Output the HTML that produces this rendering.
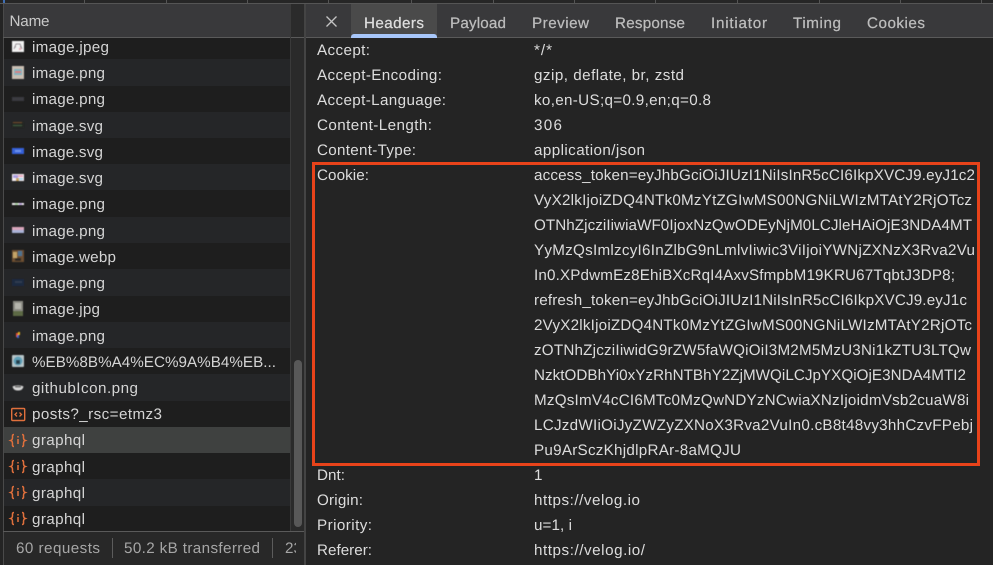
<!DOCTYPE html>
<html lang="en">
<head>
<meta charset="utf-8">
<title>Network Headers</title>
<style>
html,body{margin:0;padding:0;background:#242424;overflow:hidden;width:993px;height:565px}
svg{display:block;position:absolute;left:0;top:0}
text{font-family:"Liberation Sans",Arial,sans-serif;text-rendering:geometricPrecision}
.n{font-size:15.200px;fill:#d4d4d4}
.d{font-size:15.200px;fill:#dcdcdc}
.t{font-size:15.200px;fill:#bdbdbd;stroke:#bdbdbd;stroke-width:.25}
.f{font-size:15.200px;fill:#a6a6a6}
</style>
</head>
<body>
<svg width="993" height="565" viewBox="0 0 993 565" xmlns="http://www.w3.org/2000/svg">
<defs>
<clipPath id="fc"><rect x="0" y="531" width="296" height="34"/></clipPath>
<filter id="bl" x="-5%" y="-5%" width="110%" height="110%"><feGaussianBlur stdDeviation="0.45"/></filter>
</defs>
<rect width="993" height="565" fill="#242424"/>

<!-- top strip -->
<rect width="993" height="3" fill="#262626"/>
<rect x="0" y="3" width="993" height="1" fill="#555"/>
<g fill="#555">
<rect x="84" y="0" width="1" height="3"/><rect x="166" y="0" width="1" height="3"/><rect x="247" y="0" width="1" height="3"/><rect x="328" y="0" width="1" height="3"/><rect x="411" y="0" width="1" height="3"/><rect x="493" y="0" width="1" height="3"/><rect x="574" y="0" width="1" height="3"/><rect x="655" y="0" width="1" height="3"/><rect x="737" y="0" width="1" height="3"/><rect x="819" y="0" width="1" height="3"/><rect x="900" y="0" width="1" height="3"/><rect x="981" y="0" width="1" height="3"/>
</g>
<rect x="3" y="0" width="2" height="3" fill="#3f6fb5"/>

<!-- left column -->
<rect x="0" y="4" width="3" height="561" fill="#242424"/>
<rect x="3" y="4" width="1" height="561" fill="#4a4a4a"/>
<rect x="4" y="4" width="287" height="33" fill="#39393b"/>
<rect x="291" y="4" width="13" height="33" fill="#2b2b2b"/>
<rect x="3" y="37" width="301" height="1" fill="#5a5a5a"/>

<!-- rows -->
<rect x="4" y="38" width="286" height="21" fill="#1e1e1e"/>
<rect x="4" y="59" width="286" height="27" fill="#252628"/>
<rect x="4" y="86" width="286" height="26" fill="#1e1e1e"/>
<rect x="4" y="112" width="286" height="26" fill="#252628"/>
<rect x="4" y="138" width="286" height="26" fill="#1e1e1e"/>
<rect x="4" y="164" width="286" height="26" fill="#252628"/>
<rect x="4" y="190" width="286" height="27" fill="#1e1e1e"/>
<rect x="4" y="217" width="286" height="26" fill="#252628"/>
<rect x="4" y="243" width="286" height="26" fill="#1e1e1e"/>
<rect x="4" y="269" width="286" height="27" fill="#252628"/>
<rect x="4" y="296" width="286" height="26" fill="#1e1e1e"/>
<rect x="4" y="322" width="286" height="26" fill="#252628"/>
<rect x="4" y="348" width="286" height="26" fill="#1e1e1e"/>
<rect x="4" y="374" width="286" height="27" fill="#252628"/>
<rect x="4" y="401" width="286" height="26" fill="#1e1e1e"/>
<rect x="4" y="427" width="286" height="26" fill="#3f4140"/>
<rect x="4" y="453" width="286" height="26" fill="#1e1e1e"/>
<rect x="4" y="479" width="286" height="27" fill="#252628"/>
<rect x="4" y="506" width="286" height="25" fill="#1e1e1e"/>

<!-- scrollbar -->
<rect x="290" y="38" width="14" height="493" fill="#2a2a2a"/>
<rect x="290" y="4" width="1" height="527" fill="#3a3a3a"/>
<rect x="294" y="360" width="8" height="167" rx="4" fill="#585858"/>

<!-- divider -->
<rect x="304" y="4" width="2" height="561" fill="#444"/>

<!-- footer -->
<rect x="4" y="532" width="300" height="33" fill="#282828"/>
<rect x="3" y="531" width="301" height="1" fill="#5a5a5a"/>
<rect x="112" y="538" width="1" height="20" fill="#5c5c5c"/>
<rect x="272" y="538" width="1" height="20" fill="#5c5c5c"/>
<text class="f" x="16" y="553" textLength="84" lengthAdjust="spacing">60 requests</text>
<text class="f" x="124" y="553" textLength="136" lengthAdjust="spacing">50.2 kB transferred</text>
<g clip-path="url(#fc)"><text class="f" x="285" y="553" textLength="17" lengthAdjust="spacing">23</text></g>

<text x="9.5" y="26" font-size="15.200" fill="#c9c9c9" textLength="40" lengthAdjust="spacing">Name</text>

<!-- thumbnails -->
<g filter="url(#bl)">
<rect x="12" y="41" width="12" height="11" fill="#f2f2f2"/><path d="M14 49l2-5h4l2 5M15 47h1M20 47h1" stroke="#8a8088" stroke-width="1" fill="none"/><rect x="19" y="48" width="2" height="2" fill="#e6a5b0"/>
<rect x="12" y="66" width="12" height="13" fill="#c9bfb4"/><rect x="14" y="69" width="8" height="6" fill="#7cb3c0"/><rect x="15" y="71" width="6" height="2" fill="#d67f7f"/>
<rect x="12" y="97" width="12" height="4" fill="#3a3b3f"/>
<rect x="12" y="122" width="12" height="6" fill="#232523"/><rect x="13" y="122" width="9" height="1" fill="#6a4a2c"/><rect x="13" y="125" width="9" height="1" fill="#3f5a40"/>
<rect x="12" y="148" width="12" height="6" fill="#3560d8"/><rect x="15" y="150" width="6" height="2" fill="#6d92ea"/>
<rect x="12" y="174" width="12" height="7" fill="#f4eef2"/><rect x="13" y="175" width="5" height="3" fill="#a89be0"/><rect x="18" y="175" width="5" height="2" fill="#e9a8c0"/><rect x="16" y="178" width="3" height="3" fill="#c9a45a"/><rect x="19" y="178" width="4" height="2" fill="#a8d4ec"/>
<rect x="12" y="203" width="12" height="2" fill="#f0eef0"/><rect x="15" y="203" width="3" height="2" fill="#b8e0b0"/><rect x="19" y="203" width="3" height="2" fill="#c8b0e8"/>
<rect x="12" y="227" width="12" height="3" fill="#d9a6bc"/><rect x="12" y="230" width="12" height="3" fill="#a9b2d6"/>
<rect x="12" y="250" width="12" height="12" fill="#6d4f33"/><rect x="13" y="252" width="4" height="6" fill="#c4a468"/><rect x="18" y="251" width="4" height="5" fill="#4d7390"/><rect x="15" y="258" width="6" height="3" fill="#2f2a26"/>
<rect x="12" y="279" width="12" height="7" fill="#1f2c40"/><rect x="15" y="281" width="7" height="2" fill="#2d3b50"/>
<rect x="13" y="301" width="10" height="15" fill="#8b8b83"/><rect x="15" y="303" width="6" height="6" fill="#b5b5ad"/><rect x="13" y="311" width="10" height="5" fill="#5d6b45"/>
<rect x="16" y="333" width="2" height="4" fill="#e8502c"/><rect x="18" y="332" width="2" height="3" fill="#e0b020"/><rect x="17" y="335" width="2" height="3" fill="#3a66c4"/>
<rect x="12" y="355" width="12" height="12" rx="1" fill="#b6c4c8"/><circle cx="18" cy="361" r="4.500" fill="#5fa0b8"/><rect x="16" y="360" width="4" height="4" fill="#27404d"/>
<path d="M12.500 386.500c3-1.500 8-1.500 11 0c-1 3.500-3 4-5.500 4s-4.500-.5-5.500-4z" fill="#d6d6d6"/><rect x="15" y="386" width="6" height="1.500" fill="#555"/>
</g>

<!-- fetch / doc icons -->
<rect x="11.700" y="408.500" width="13" height="12" rx="1" fill="none" stroke="#e0703c" stroke-width="1.400"/>
<path d="M17 412.500l-2 2 2 2M19.500 412.500l2 2-2 2" fill="none" stroke="#e0703c" stroke-width="1.300"/>
<g fill="none" stroke="#e0703c" stroke-width="1.500">
<path d="M14 434.500c-2 0-1.500 1.500-1.500 3s-.3 2.500-1.800 3c1.500.5 1.800 1.500 1.800 3s-.5 3 1.500 3M22 434.500c2 0 1.500 1.500 1.500 3s.3 2.500 1.800 3c-1.500.5-1.800 1.500-1.800 3s.5 3-1.500 3"/>
<path d="M18 439v5M18 436v1.500"/>
<path d="M14 460.500c-2 0-1.500 1.500-1.500 3s-.3 2.500-1.800 3c1.500.5 1.800 1.500 1.800 3s-.5 3 1.500 3M22 460.500c2 0 1.500 1.500 1.500 3s.3 2.500 1.800 3c-1.500.5-1.800 1.500-1.800 3s.5 3-1.500 3"/>
<path d="M18 465v5M18 462v1.500"/>
<path d="M14 486.500c-2 0-1.500 1.500-1.500 3s-.3 2.500-1.800 3c1.500.5 1.800 1.500 1.800 3s-.5 3 1.500 3M22 486.500c2 0 1.500 1.500 1.500 3s.3 2.500 1.800 3c-1.500.5-1.800 1.500-1.800 3s.5 3-1.500 3"/>
<path d="M18 491v5M18 488v1.500"/>
<path d="M14 512.500c-2 0-1.500 1.500-1.500 3s-.3 2.500-1.800 3c1.500.5 1.800 1.500 1.800 3s-.5 3 1.500 3M22 512.500c2 0 1.500 1.500 1.500 3s.3 2.500 1.800 3c-1.500.5-1.800 1.500-1.800 3s.5 3-1.500 3"/>
<path d="M18 517v5M18 514v1.500"/>
</g>

<!-- list names -->
<text class="n" x="32" y="52" textLength="77" lengthAdjust="spacing">image.jpeg</text>
<text class="n" x="32" y="78" textLength="73" lengthAdjust="spacing">image.png</text>
<text class="n" x="32" y="104" textLength="73" lengthAdjust="spacing">image.png</text>
<text class="n" x="32" y="131" textLength="71" lengthAdjust="spacing">image.svg</text>
<text class="n" x="32" y="157" textLength="71" lengthAdjust="spacing">image.svg</text>
<text class="n" x="32" y="183" textLength="71" lengthAdjust="spacing">image.svg</text>
<text class="n" x="32" y="209" textLength="73" lengthAdjust="spacing">image.png</text>
<text class="n" x="32" y="236" textLength="73" lengthAdjust="spacing">image.png</text>
<text class="n" x="32" y="262" textLength="84" lengthAdjust="spacing">image.webp</text>
<text class="n" x="32" y="288" textLength="73" lengthAdjust="spacing">image.png</text>
<text class="n" x="32" y="314" textLength="68" lengthAdjust="spacing">image.jpg</text>
<text class="n" x="32" y="341" textLength="73" lengthAdjust="spacing">image.png</text>
<text class="n" x="32" y="367" textLength="244" lengthAdjust="spacing">%EB%8B%A4%EC%9A%B4%EB...</text>
<text class="n" x="32" y="393" textLength="106" lengthAdjust="spacing">githubIcon.png</text>
<text class="n" x="32" y="419" textLength="130" lengthAdjust="spacing">posts?_rsc=etmz3</text>
<text class="n" x="32" y="445" textLength="53" lengthAdjust="spacing">graphql</text>
<text class="n" x="32" y="472" textLength="53" lengthAdjust="spacing">graphql</text>
<text class="n" x="32" y="498" textLength="53" lengthAdjust="spacing">graphql</text>
<text class="n" x="32" y="524" textLength="53" lengthAdjust="spacing">graphql</text>

<!-- right tabs -->
<rect x="306" y="4" width="687" height="33" fill="#39393b"/>
<rect x="306" y="37" width="687" height="1" fill="#5a5a5a"/>
<rect x="351" y="4" width="86" height="33" fill="#4a4a4a"/>
<path d="M351 38v-1a3 3 0 0 1 3-3h80a3 3 0 0 1 3 3v1z" fill="#a8c7fa"/>
<path d="M326.500 16.500l10 10M336.500 16.500l-10 10" stroke="#c4c4c4" stroke-width="1.300" fill="none"/>
<text class="t" x="364" y="28" textLength="60" lengthAdjust="spacing" style="fill:#dedede;stroke:#dedede">Headers</text>
<text class="t" x="450" y="28" textLength="56" lengthAdjust="spacing">Payload</text>
<text class="t" x="532" y="28" textLength="57" lengthAdjust="spacing">Preview</text>
<text class="t" x="615" y="28" textLength="70" lengthAdjust="spacing">Response</text>
<text class="t" x="711" y="28" textLength="56" lengthAdjust="spacing">Initiator</text>
<text class="t" x="793" y="28" textLength="48" lengthAdjust="spacing">Timing</text>
<text class="t" x="867" y="28" textLength="58" lengthAdjust="spacing">Cookies</text>

<!-- labels -->
<text class="d" x="317" y="55" textLength="53" lengthAdjust="spacing">Accept:</text>
<text class="d" x="317" y="80" textLength="125" lengthAdjust="spacing">Accept-Encoding:</text>
<text class="d" x="317" y="105" textLength="129" lengthAdjust="spacing">Accept-Language:</text>
<text class="d" x="317" y="130" textLength="115" lengthAdjust="spacing">Content-Length:</text>
<text class="d" x="317" y="155" textLength="99" lengthAdjust="spacing">Content-Type:</text>
<text class="d" x="317" y="180" textLength="52" lengthAdjust="spacing">Cookie:</text>
<text class="d" x="317" y="480" textLength="28" lengthAdjust="spacing">Dnt:</text>
<text class="d" x="317" y="505" textLength="46" lengthAdjust="spacing">Origin:</text>
<text class="d" x="317" y="530" textLength="55" lengthAdjust="spacing">Priority:</text>
<text class="d" x="317" y="555" textLength="55" lengthAdjust="spacing">Referer:</text>

<!-- values -->
<text class="d" x="534" y="55" textLength="18" lengthAdjust="spacing">*/*</text>
<text class="d" x="534" y="80" textLength="150" lengthAdjust="spacing">gzip, deflate, br, zstd</text>
<text class="d" x="534" y="105" textLength="177" lengthAdjust="spacing">ko,en-US;q=0.9,en;q=0.8</text>
<text class="d" x="534" y="130" textLength="28" lengthAdjust="spacing">306</text>
<text class="d" x="534" y="155" textLength="111" lengthAdjust="spacing">application/json</text>
<text class="d" x="534" y="180" textLength="441" lengthAdjust="spacing">access_token=eyJhbGciOiJIUzI1NiIsInR5cCI6IkpXVCJ9.eyJ1c2</text>
<text class="d" x="534" y="205" textLength="438" lengthAdjust="spacing">VyX2lkIjoiZDQ4NTk0MzYtZGIwMS00NGNiLWIzMTAtY2RjOTcz</text>
<text class="d" x="534" y="230" textLength="438" lengthAdjust="spacing">OTNhZjcziIiwiaWF0IjoxNzQwODEyNjM0LCJleHAiOjE3NDA4MT</text>
<text class="d" x="534" y="255" textLength="441" lengthAdjust="spacing">YyMzQsImlzcyI6InZlbG9nLmlvIiwic3ViIjoiYWNjZXNzX3Rva2Vu</text>
<text class="d" x="534" y="280" textLength="421" lengthAdjust="spacing">In0.XPdwmEz8EhiBXcRqI4AxvSfmpbM19KRU67TqbtJ3DP8;</text>
<text class="d" x="534" y="305" textLength="433" lengthAdjust="spacing">refresh_token=eyJhbGciOiJIUzI1NiIsInR5cCI6IkpXVCJ9.eyJ1c</text>
<text class="d" x="534" y="330" textLength="438" lengthAdjust="spacing">2VyX2lkIjoiZDQ4NTk0MzYtZGIwMS00NGNiLWIzMTAtY2RjOTc</text>
<text class="d" x="534" y="355" textLength="437" lengthAdjust="spacing">zOTNhZjcziIiwidG9rZW5faWQiOiI3M2M5MzU3Ni1kZTU3LTQw</text>
<text class="d" x="534" y="380" textLength="432" lengthAdjust="spacing">NzktODBhYi0xYzRhNTBhY2ZjMWQiLCJpYXQiOjE3NDA4MTI2</text>
<text class="d" x="534" y="405" textLength="435" lengthAdjust="spacing">MzQsImV4cCI6MTc0MzQwNDYzNCwiaXNzIjoidmVsb2cuaW8i</text>
<text class="d" x="534" y="430" textLength="439" lengthAdjust="spacing">LCJzdWIiOiJyZWZyZXNoX3Rva2VuIn0.cB8t48vy3hhCzvFPebj</text>
<text class="d" x="534" y="455" textLength="207" lengthAdjust="spacing">Pu9ArSczKhjdlpRAr-8aMQJU</text>
<text class="d" x="534" y="480" textLength="7" lengthAdjust="spacing">1</text>
<text class="d" x="534" y="505" textLength="106" lengthAdjust="spacing">https://velog.io</text>
<text class="d" x="534" y="530" textLength="38" lengthAdjust="spacing">u=1, i</text>
<text class="d" x="534" y="555" textLength="111" lengthAdjust="spacing">https://velog.io/</text>

<!-- highlight -->
<rect x="313.500" y="163.500" width="665" height="301" fill="none" stroke="#e8431a" stroke-width="3"/>
</svg>
</body>
</html>
